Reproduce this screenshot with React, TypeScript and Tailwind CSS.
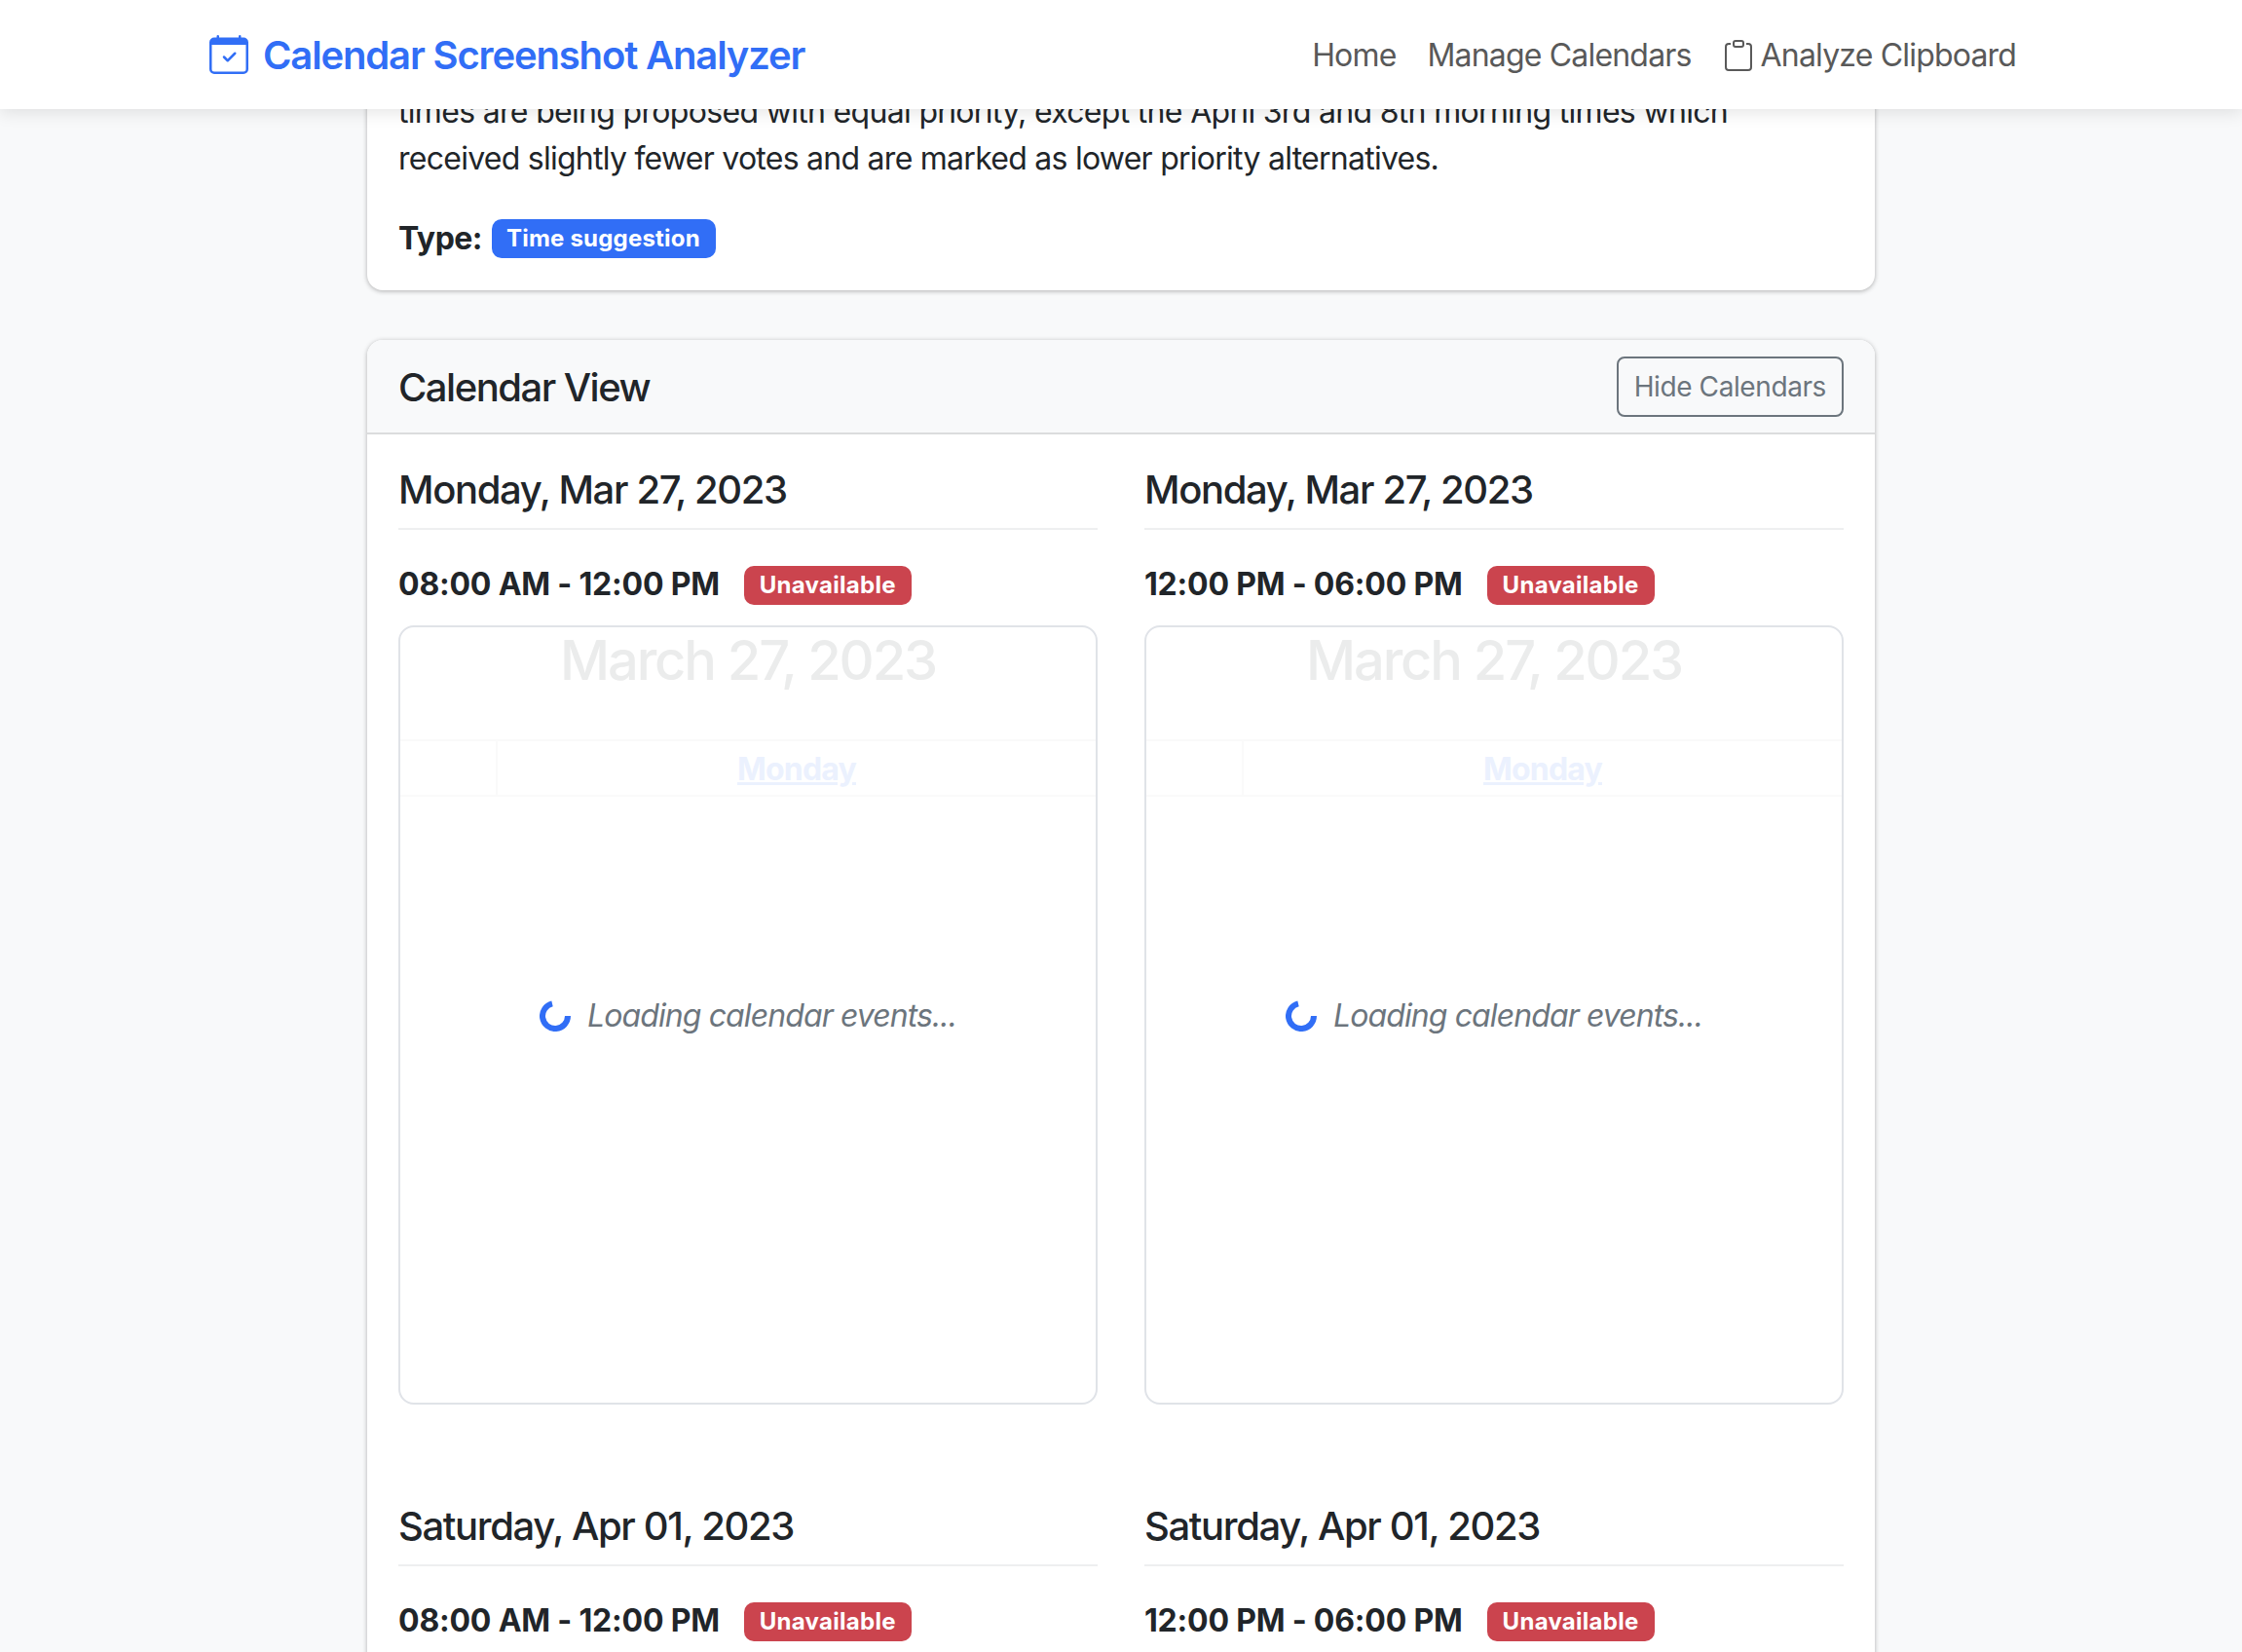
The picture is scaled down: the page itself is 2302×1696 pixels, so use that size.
const Slot = ({ date, time }: { date: string; time: string }) => (
  <div className="min-w-0">
    <div className="h-[98px] border-b-2 border-[#eeeff0] pt-[33px] text-[40px] font-medium leading-[48px] tracking-[-1.35px] text-[#212529]">{date}</div>
    <div className="mt-[36px] flex h-[40px] items-center">
      <span className="text-[32px] font-bold leading-[40px] tracking-[-0.2px] text-[#212529]">{time}</span>
      <span className="ml-[25px] mt-[2px] flex h-[40px] items-center rounded-[10px] bg-[#cb444e] px-[16px] text-[24px] font-bold tracking-[0.27px] text-white">Unavailable</span>
    </div>
  </div>
);

const CalendarBox = () => (
  <div className="relative mt-[22px] h-[800px] overflow-hidden rounded-[16px] border-2 border-[#e0e3e8] bg-white">
    <div className="h-[115px] text-center text-[56px] font-medium leading-[68px] tracking-[-2.1px] text-[#ebecec]">March 27, 2023</div>
    <div className="flex h-[59px] border-y-2 border-[#fafafa]">
      <div className="w-[100px] border-r-2 border-[#fafafa]" />
      <div className="flex-1 text-center text-[32px] font-bold leading-[58px] tracking-[-0.8px] text-[#ebf1fe] underline">Monday</div>
    </div>
    <div className="absolute inset-x-0 top-[375px] flex items-center justify-center">
      <svg viewBox="0 0 32 32" className="h-[32px] w-[32px]" fill="none">
        <path d="M13 3.4 A13 13 0 1 0 29 16" stroke="#316ef6" strokeWidth="6" />
      </svg>
      <span className="ml-[17px] text-[32px] italic leading-[48px] tracking-[-0.9px] text-[#6c757d]">Loading calendar events...</span>
    </div>
  </div>
);

export default function App() {
  return (
    <div className="h-[1696px] overflow-hidden bg-[#f8f9fa] text-[32px] leading-[48px] tracking-[-0.74px] text-[#212529] [font-family:Inter,sans-serif]">
      <header className="relative z-10 flex h-[112px] items-center justify-between bg-white pl-[215px] pr-[216px] shadow-[0_4px_16px_rgba(0,0,0,0.1)]">
        <div className="flex items-center">
          <svg viewBox="0 0 16 16" className="h-[40px] w-[40px]" fill="#316ef6">
            <path d="M10.854 7.146a.5.5 0 0 1 0 .708l-3 3a.5.5 0 0 1-.708 0l-1.5-1.5a.5.5 0 1 1 .708-.708L7.5 9.793l2.646-2.647a.5.5 0 0 1 .708 0z" />
            <path d="M3.5 0a.5.5 0 0 1 .5.5V1h8V.5a.5.5 0 0 1 1 0V1h1a2 2 0 0 1 2 2v11a2 2 0 0 1-2 2H2a2 2 0 0 1-2-2V3a2 2 0 0 1 2-2h1V.5a.5.5 0 0 1 .5-.5zM1 4v10a1 1 0 0 0 1 1h12a1 1 0 0 0 1-1V4H1z" />
          </svg>
          <span className="ml-[15px] pt-[2px] text-[40px] font-semibold tracking-[-1.15px] text-[#316ef6]">Calendar Screenshot Analyzer</span>
        </div>
        <nav className="flex items-center pt-[2px] tracking-[-0.82px] text-[#595959]">
          <span className="px-[16px]">Home</span>
          <span className="px-[16px]">Manage Calendars</span>
          <span className="flex items-center px-[16px]">
            <svg viewBox="0 0 16 16" className="mr-[7px] h-[32px] w-[32px]" fill="#595959">
              <path d="M4 1.5H3a2 2 0 0 0-2 2V14a2 2 0 0 0 2 2h10a2 2 0 0 0 2-2V3.5a2 2 0 0 0-2-2h-1v1h1a1 1 0 0 1 1 1V14a1 1 0 0 1-1 1H3a1 1 0 0 1-1-1V3.5a1 1 0 0 1 1-1h1v-1z" />
              <path d="M9.5 1a.5.5 0 0 1 .5.5v1a.5.5 0 0 1-.5.5h-3a.5.5 0 0 1-.5-.5v-1a.5.5 0 0 1 .5-.5h3zm-3-1A1.5 1.5 0 0 0 5 1.5v1A1.5 1.5 0 0 0 6.5 4h3A1.5 1.5 0 0 0 11 2.5v-1A1.5 1.5 0 0 0 9.5 0h-3z" />
            </svg>
            Analyze Clipboard
          </span>
        </nav>
      </header>
      <main className="mx-auto w-[1548px]">
        <section className="-mt-[21px] rounded-b-[16px] bg-white px-[32px] pb-[33px] shadow-[0_1px_5px_rgba(0,0,0,0.3)]">
          <p>
            <span className="tracking-[-0.68px]">times are being proposed with equal priority, except the April 3rd and 8th morning times which</span>
            <br />received slightly fewer votes and are marked as lower priority alternatives.
          </p>
          <div className="mt-[37px] flex h-[41px] items-center">
            <span className="font-bold tracking-[-0.5px]">Type:</span>
            <span className="ml-[10px] flex h-[40px] items-center rounded-[10px] bg-[#316ef6] pl-[15px] pr-[16px] text-[24px] font-bold tracking-[0.2px] text-white">Time suggestion</span>
          </div>
        </section>
        <section className="mt-[51px] rounded-[16px] bg-white pb-[100px] shadow-[0_1px_5px_rgba(0,0,0,0.3)]">
          <div className="flex h-[97px] items-center justify-between rounded-t-[16px] border-b-2 border-[#dbdcdd] bg-[#f8f9fa] px-[32px]">
            <span className="pt-[2px] text-[40px] font-medium tracking-[-1.5px]">Calendar View</span>
            <span className="flex h-[62px] items-center rounded-[8px] border-2 border-[#6c757d] px-[16px] text-[28px] tracking-[-0.4px] text-[#6c757d]">Hide Calendars</span>
          </div>
          <div className="grid grid-cols-2 gap-x-[48px] px-[32px]">
            <div><Slot date="Monday, Mar 27, 2023" time="08:00 AM - 12:00 PM" /><CalendarBox /></div>
            <div><Slot date="Monday, Mar 27, 2023" time="12:00 PM - 06:00 PM" /><CalendarBox /></div>
            <div className="mt-[68px]"><Slot date="Saturday, Apr 01, 2023" time="08:00 AM - 12:00 PM" /></div>
            <div className="mt-[68px]"><Slot date="Saturday, Apr 01, 2023" time="12:00 PM - 06:00 PM" /></div>
          </div>
        </section>
      </main>
    </div>
  );
}
